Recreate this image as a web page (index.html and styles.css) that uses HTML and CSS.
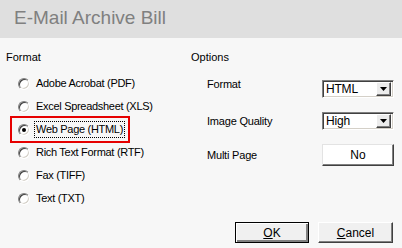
FILE: index.html
```html
<!DOCTYPE html>
<html lang="en">
<head>
    <meta charset="UTF-8">
    <link rel="stylesheet" href="styles.css">
    <title>E-Mail Archive Bill</title>
</head>
<body>
<div class="window">
    <div class="titlebar">E-Mail Archive Bill</div>

    <div class="panel">
        <!-- left group: output format -->
        <div class="format-col">
            <div class="group-label">Format</div>
            <div class="choices">
                <label class="choice"><span class="radio"></span><span class="choice-text">Adobe Acrobat (PDF)</span></label>
                <label class="choice"><span class="radio"></span><span class="choice-text">Excel Spreadsheet (XLS)</span></label>
                <label class="choice picked"><span class="radio on"></span><span class="choice-text focus">Web Page (HTML)</span></label>
                <label class="choice"><span class="radio"></span><span class="choice-text">Rich Text Format (RTF)</span></label>
                <label class="choice"><span class="radio"></span><span class="choice-text">Fax (TIFF)</span></label>
                <label class="choice"><span class="radio"></span><span class="choice-text">Text (TXT)</span></label>
            </div>
        </div>

        <!-- right group: options -->
        <div class="options-col">
            <div class="group-label">Options</div>
            <div class="options">
                <span class="opt-label first">Format</span>
                <div class="combo">
                    <span class="combo-value">HTML</span>
                    <span class="combo-btn"><svg width="7" height="4" viewBox="0 0 7 4"><polygon points="0,0 7,0 3.5,4" fill="#000"/></svg></span>
                </div>

                <span class="opt-label">Image Quality</span>
                <div class="combo">
                    <span class="combo-value">High</span>
                    <span class="combo-btn"><svg width="7" height="4" viewBox="0 0 7 4"><polygon points="0,0 7,0 3.5,4" fill="#000"/></svg></span>
                </div>

                <span class="opt-label">Multi Page</span>
                <button type="button" class="toggle">No</button>
            </div>
        </div>
    </div>

    <div class="actions">
        <button type="button" class="btn default"><u>O</u>K</button>
        <button type="button" class="btn"><u>C</u>ancel</button>
    </div>
</div>
</body>
</html>
```

FILE: styles.css
```css
* {box-sizing: border-box;}
body {margin: 0; background: #f7f7f7; font-family: "Liberation Sans", Arial, sans-serif; font-size: 11px; color: #000;}

.window {width: 402px; height: 248px; display: flex; flex-direction: column;}

.titlebar {height: 38px; line-height: 36px; padding-left: 14px; background: #dfdfdf;
    color: #808080; font-size: 19px;}

.panel {flex: 1; display: flex;}
.group-label {line-height: 13px; margin-top: 13px;}

/* format radios */
.format-col {width: 191px; padding-left: 6px;}
.choices {display: flex; flex-direction: column; align-items: flex-start; gap: 10px;
    margin: 13px 0 0 11px;}
.choice {display: flex; align-items: center; gap: 6px; padding-left: 1px;
    line-height: 13px; white-space: nowrap; letter-spacing: -0.3px;}
.choice.picked {outline: 2px solid #e60000; outline-offset: 5px;}
.choice-text.focus {outline: 1px dotted #000; outline-offset: 1px;}

.radio {width: 12px; height: 12px; border-radius: 50%; background: #fff; position: relative;
    border: 1px solid; border-color: #808080 #fff #fff #808080;
    box-shadow: inset 1px 1px 0 #404040, inset -1px -1px 0 #d4d0c8;}
.radio.on::after {content: ""; position: absolute; left: 3px; top: 3px; width: 4px; height: 4px;
    border-radius: 50%; background: #000;}

/* options */
.options-col {flex: 1;}
.options {display: grid; grid-template-columns: 115px 72px; align-items: center;
    row-gap: 14px; margin: 16px 0 0 16px; letter-spacing: -0.2px;}
.opt-label {line-height: 13px;}
.opt-label.first {align-self: start; margin-top: -2px;}

.combo {height: 18px; display: flex; align-items: center; background: #fff;
    border: 1px solid; border-color: #808080 #fff #fff #808080;
    box-shadow: inset 1px 1px 0 #404040, inset -1px -1px 0 #d4d0c8; padding: 0 2px 0 3px;}
.combo-value {flex: 1; line-height: 13px; font-size: 12px;}
.combo-btn {width: 15px; height: 14px; display: flex; align-items: center; justify-content: center;
    background: #ececec; border: 1px solid; border-color: #fff #404040 #404040 #fff;
    box-shadow: inset -1px -1px 0 #808080;}

.toggle {height: 22px; background: #fff; font: inherit; font-size: 12px; padding: 0;
    border: 1px solid; border-color: #e3e3e3 #404040 #404040 #e3e3e3;
    box-shadow: inset -1px -1px 0 #808080;}

/* bottom buttons */
.actions {display: flex; justify-content: flex-end; gap: 9px; padding: 0 9px 5px 0;}
.btn {height: 21px; width: 75px; padding: 0; background: #f0f0f0; font: inherit; font-size: 12px;
    border: 1px solid; border-color: #fff #404040 #404040 #fff;
    box-shadow: inset -1px -1px 0 #808080;}
.btn.default {width: 74px; border-color: #000;
    box-shadow: inset 1px 1px 0 #fff, inset -2px -2px 0 #808080;}
```
